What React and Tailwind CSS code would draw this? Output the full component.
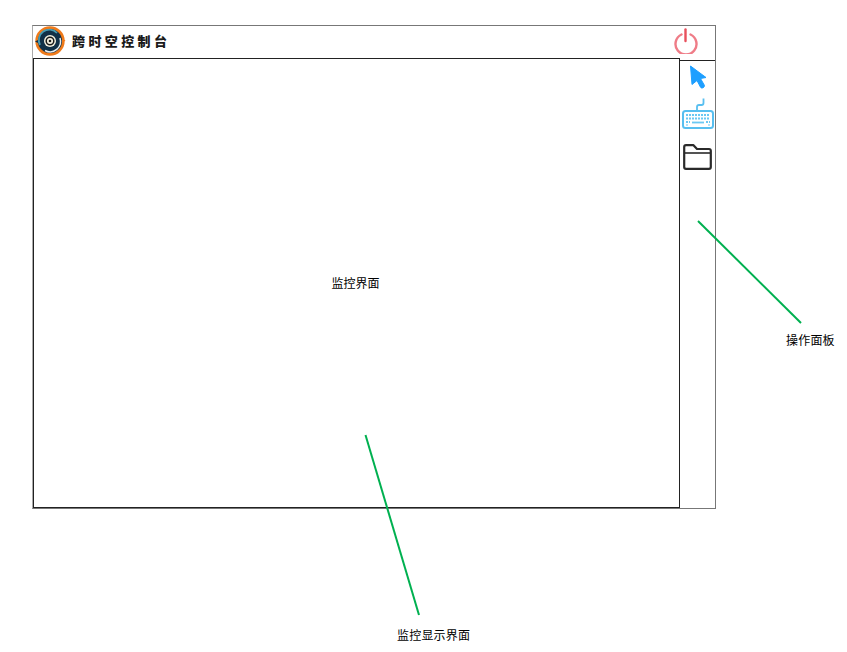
import React from "react";

const cjk = "font-['Noto_Sans_CJK_SC',sans-serif]";

const Logo = () => (
  <svg width="32" height="32" viewBox="0 0 32 32" className="shrink-0">
    <circle cx="16" cy="16" r="13.400" fill="#123047" stroke="#ef7a1a" strokeWidth="2.600" />
    <path d="M1 16.500 L5 14.500 L5 18.500 Z" fill="#123047" />
    <path d="M31.500 15.500 L28 13.500 L28 17.500 Z" fill="#ef7a1a" />
    <path d="M6 20 A10.500 10.500 0 0 1 23 8" fill="none" stroke="#4a9db3" strokeWidth="1.800" />
    <path d="M26 13 A10.500 10.500 0 0 1 11 25.500" fill="none" stroke="#e8eef0" strokeWidth="1.500" />
    <circle cx="16" cy="16" r="6" fill="#f6f2e2" />
    <circle cx="16" cy="16" r="3.800" fill="none" stroke="#1a1a1a" strokeWidth="1.500" />
    <circle cx="16" cy="16" r="1.300" fill="#1a1a1a" />
  </svg>
);

const PowerIcon = () => (
  <svg width="24" height="26" viewBox="0 0 24 26">
    <path d="M7.500 6.500 A10.500 10.500 0 1 0 16.500 6.500" fill="none" stroke="#ef7c87" strokeWidth="2.400" strokeLinecap="round" />
    <path d="M11.500 1.500 L11.500 13" fill="none" stroke="#e8505c" strokeWidth="2.400" strokeLinecap="round" />
  </svg>
);

const CursorIcon = () => (
  <svg width="18" height="24" viewBox="0 0 18 24">
    <path
      d="M1.500 1 L17 12.500 L11.500 13.500 L15.500 20.500 Q15.500 22 14 22.800 Q12.500 23.500 11.500 22.200 L8 15.500 L3 19.500 Z"
      fill="#1e9fff"
      stroke="#1e9fff"
      strokeLinejoin="round"
    />
  </svg>
);

const KeyboardIcon = () => (
  <svg width="32" height="32" viewBox="0 0 32 32" fill="none">
    <path d="M21.500 0.500 L21.500 5 Q21.500 7 19.500 7 L17 7 Q15 7 15 9 L15 13" stroke="#58bff0" strokeWidth="1.800" />
    <rect x="1" y="13" width="30" height="17" rx="2.500" stroke="#58bff0" strokeWidth="2" />
    <g stroke="#6cc8f3" strokeWidth="1.800" strokeDasharray="2 1">
      <path d="M4 17 H28" />
      <path d="M4 20.500 H28" />
      <path d="M4 24 H8" />
      <path d="M24 24 H28" />
    </g>
    <path d="M10 24.500 H22" stroke="#6cc8f3" strokeWidth="1.800" />
    <path d="M4 27 H6 M26 27 H28" stroke="#6cc8f3" strokeWidth="1.200" />
  </svg>
);

const FolderIcon = () => (
  <svg width="29" height="26" viewBox="0 0 29 26" fill="none">
    <path
      d="M1.200 23 L1.200 3 Q1.200 1.200 3 1.200 L10.500 1.200 L14 5 L26 5 Q27.800 5 27.800 6.800 L27.800 23 Q27.800 24.800 26 24.800 L3 24.800 Q1.200 24.800 1.200 23 Z"
      stroke="#2a2a2a"
      strokeWidth="2.200"
      strokeLinejoin="round"
    />
    <path d="M1.200 9 L27.800 9" stroke="#2a2a2a" strokeWidth="1.600" />
  </svg>
);

export default function App() {
  return (
    <div className={`relative h-[652px] w-[847px] bg-white pl-8 pt-[25px] text-black ${cjk}`}>
      <div className="flex h-[484px] w-[684px] flex-col border border-[#777777] border-l-[#aaaaaa]">
        <header className="flex h-8 items-center justify-between pl-[1px] pr-[17px]">
          <div className="-mt-[3px] flex items-center gap-[6px]">
            <Logo />
            <span className="text-[13px] font-black leading-none tracking-[3.4px] text-[#1a1a1a]">跨时空控制台</span>
          </div>
          <div className="-mt-[2px]">
            <PowerIcon />
          </div>
        </header>
        <div className="flex flex-1">
          <main className="flex w-[647px] items-center justify-center border border-[#222222] pr-[2px] text-xs">
            监控界面
          </main>
          <aside className="mt-[2px] flex flex-1 flex-col items-center border-t border-[#222222] pt-[4px]">
            <CursorIcon />
            <div className="mt-[9px]">
              <KeyboardIcon />
            </div>
            <div className="mt-[14px]">
              <FolderIcon />
            </div>
          </aside>
        </div>
      </div>

      {/* annotations */}
      <svg width="847" height="652" className="pointer-events-none absolute left-0 top-0">
        <line x1="698" y1="221" x2="801" y2="323" stroke="#00b050" strokeWidth="2" />
        <line x1="365.500" y1="435" x2="419" y2="615" stroke="#00b050" strokeWidth="2" />
      </svg>
      <span className="absolute left-[786px] top-[331px] text-xs leading-[17px] tracking-[0.2px]">操作面板</span>
      <span className="absolute left-[397px] top-[626px] text-xs leading-[17px] tracking-[0.2px]">监控显示界面</span>
    </div>
  );
}
